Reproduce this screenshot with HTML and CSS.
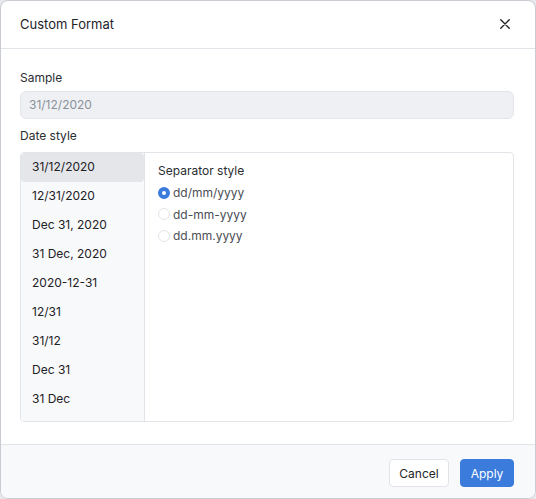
FILE: index.html
```html
<!DOCTYPE html>
<html lang="en">
<head>
<meta charset="utf-8">
<title>Custom Format</title>
<link rel="stylesheet" href="styles.css">
</head>
<body>
<div class="dialog">
  <div class="header">
    <div class="title">Custom Format</div>
    <button class="close" aria-label="Close">
      <svg width="10" height="10" viewBox="0 0 10 10"><path d="M0.75 0.75L9.25 9.25M9.25 0.75L0.75 9.25" stroke="#222" stroke-width="1.4" stroke-linecap="round"/></svg>
    </button>
  </div>
  <div class="body">
    <div class="label">Sample</div>
    <div class="input">31/12/2020</div>
    <div class="label label-date">Date style</div>
    <div class="box">
      <div class="list">
        <div class="item selected">31/12/2020</div>
        <div class="item">12/31/2020</div>
        <div class="item">Dec 31, 2020</div>
        <div class="item">31 Dec, 2020</div>
        <div class="item">2020-12-31</div>
        <div class="item">12/31</div>
        <div class="item">31/12</div>
        <div class="item">Dec 31</div>
        <div class="item">31 Dec</div>
      </div>
      <div class="pane">
        <div class="pane-title">Separator style</div>
        <div class="radio checked"><span class="dot"></span>dd/mm/yyyy</div>
        <div class="radio"><span class="dot"></span>dd-mm-yyyy</div>
        <div class="radio"><span class="dot"></span>dd.mm.yyyy</div>
      </div>
    </div>
  </div>
  <div class="footer">
    <button class="btn cancel">Cancel</button>
    <button class="btn apply">Apply</button>
  </div>
</div>
</body>
</html>
```
FILE: styles.css
```css
* { box-sizing: border-box; }
html, body { margin: 0; padding: 0; }
body {
  background: #e6e8ec;
  font-family: Inter, "Noto Sans", sans-serif;
  font-size: 12px;
  color: #222529;
}
.dialog {
  width: 536px;
  height: 499px;
  background: #fff;
  border: 1px solid #c9cdd3;
  border-radius: 8px;
  overflow: hidden;
  display: flex;
  flex-direction: column;
}
.header {
  height: 48px;
  flex: none;
  border-bottom: 1px solid #e1e4e8;
  display: flex;
  align-items: center;
  justify-content: space-between;
  padding: 0 25px 1px 19px;
}
.title {
  font-size: 13px;
  color: #1f2328;
}
.close {
  border: none;
  background: none;
  padding: 0;
  width: 10px;
  height: 10px;
  display: flex;
}
.body {
  flex: 1;
  padding: 21px 21px 0 19px;
}
.label {
  height: 16px;
  line-height: 16px;
  color: #2a2d31;
  margin-bottom: 5px;
}
.label-date {
  margin-top: 9px;
  margin-bottom: 8px;
}
.input {
  height: 28px;
  line-height: 26px;
  background: #eef0f4;
  border: 1px solid #e2e5ea;
  border-radius: 6px;
  padding: 0 8px;
  color: #8b9099;
}
.box {
  height: 270px;
  border: 1px solid #e1e4e8;
  border-radius: 4px;
  display: flex;
  overflow: hidden;
}
.list {
  width: 124px;
  background: #f8f9fb;
  border-right: 1px solid #e1e4e8;
}
.item {
  height: 29px;
  line-height: 27px;
  padding-left: 11px;
  padding-bottom: 2px;
  color: #1e2125;
}
.item.selected {
  background: #e4e6ea;
  border-radius: 4px;
}
.pane {
  flex: 1;
  padding: 9px 13px;
}
.pane-title {
  height: 17px;
  line-height: 17px;
  color: #2a2d31;
  margin-bottom: 3px;
}
.radio {
  height: 21.5px;
  display: flex;
  align-items: center;
  color: #4a4e55;
}
.dot {
  width: 12px;
  height: 12px;
  border-radius: 50%;
  border: 1px solid #e3e5e9;
  background: #fff;
  margin-right: 3px;
  flex: none;
}
.radio.checked .dot {
  border: 4px solid #3a7bdc;
  background: #fff;
}
.footer {
  height: 54px;
  flex: none;
  border-top: 1px solid #e1e4e8;
  background: #f8f9fb;
  display: flex;
  justify-content: flex-end;
  align-items: flex-start;
  gap: 11px;
  padding: 14px 21px 0 0;
}
.btn {
  height: 28px;
  font-family: Inter, "Noto Sans", sans-serif;
  font-size: 12px;
  border-radius: 4px;
  padding: 0;
  cursor: pointer;
}
.cancel {
  width: 60px;
  background: #fff;
  border: 1px solid #e1e4e8;
  color: #222529;
}
.apply {
  width: 54px;
  background: #3a7bdc;
  border: 1px solid #3a7bdc;
  color: #fff;
}
```
